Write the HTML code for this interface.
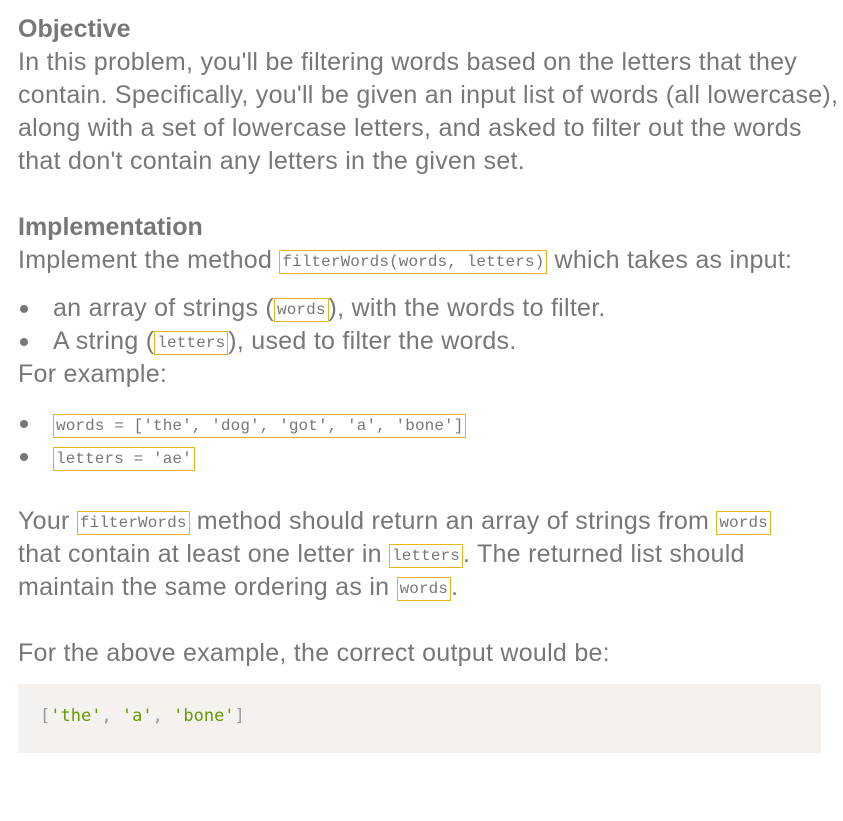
<!DOCTYPE html>
<html><head><meta charset="utf-8"><style>
html,body{margin:0;padding:0;background:#fff;width:843px;height:821px;overflow:hidden}
body{font-family:"Liberation Sans",sans-serif;color:#777;font-size:25px;letter-spacing:0.27px;position:relative}
.l{position:absolute;left:18px;white-space:nowrap;line-height:33px;height:33px}
b{font-weight:bold;color:#777;letter-spacing:0}
code{font-family:"Liberation Mono","Noto Serif CJK SC",monospace;font-size:16px;border:1px solid #e8b41a;padding:2px 2px;color:#777;position:relative;top:-2px;letter-spacing:0.1px}
.dot{position:absolute;left:20px;width:8px;height:8px;border-radius:50%;background:#777}
.pre{position:absolute;left:18px;top:684px;width:803px;height:69px;background:#f4f1ee}
.pre span{position:absolute;left:22px;top:22px;font-family:"DejaVu Sans Mono",monospace;font-size:17px;color:#999;letter-spacing:0}
.g{color:#690;font-style:normal}
</style></head><body>
<div class="l" style="top:13px"><b>Objective</b></div>
<div class="l" style="top:46px">In this problem, you'll be filtering words based on the letters that they</div>
<div class="l" style="top:79px">contain. Specifically, you'll be given an input list of words (all lowercase),</div>
<div class="l" style="top:112px">along with a set of lowercase letters, and asked to filter out the words</div>
<div class="l" style="top:145px">that don't contain any letters in the given set.</div>
<div class="l" style="top:211px"><b>Implementation</b></div>
<div class="l" style="top:244px">Implement the method <code>filterWords(words, letters)</code> which takes as input:</div>
<div class="dot" style="top:305px"></div>
<div class="l" style="top:292px;left:53px">an array of strings (<code>words</code>), with the words to filter.</div>
<div class="dot" style="top:338px"></div>
<div class="l" style="top:325px;left:53px">A string (<code>letters</code>), used to filter the words.</div>
<div class="l" style="top:358px">For example:</div>
<div class="dot" style="top:420px"></div>
<div class="l" style="top:408px;left:53px"><code>words = ['the', 'dog', 'got', 'a', 'bone']</code></div>
<div class="dot" style="top:453px"></div>
<div class="l" style="top:441px;left:53px"><code>letters = 'ae'</code></div>
<div class="l" style="top:505px">Your <code>filterWords</code> method should return an array of strings from <code>words</code></div>
<div class="l" style="top:538px">that contain at least one letter in <code>letters</code>. The returned list should</div>
<div class="l" style="top:571px">maintain the same ordering as in <code>words</code>.</div>
<div class="l" style="top:637px">For the above example, the correct output would be:</div>
<div class="pre"><span>[<i class="g">'the'</i>, <i class="g">'a'</i>, <i class="g">'bone'</i>]</span></div>
</body></html>
